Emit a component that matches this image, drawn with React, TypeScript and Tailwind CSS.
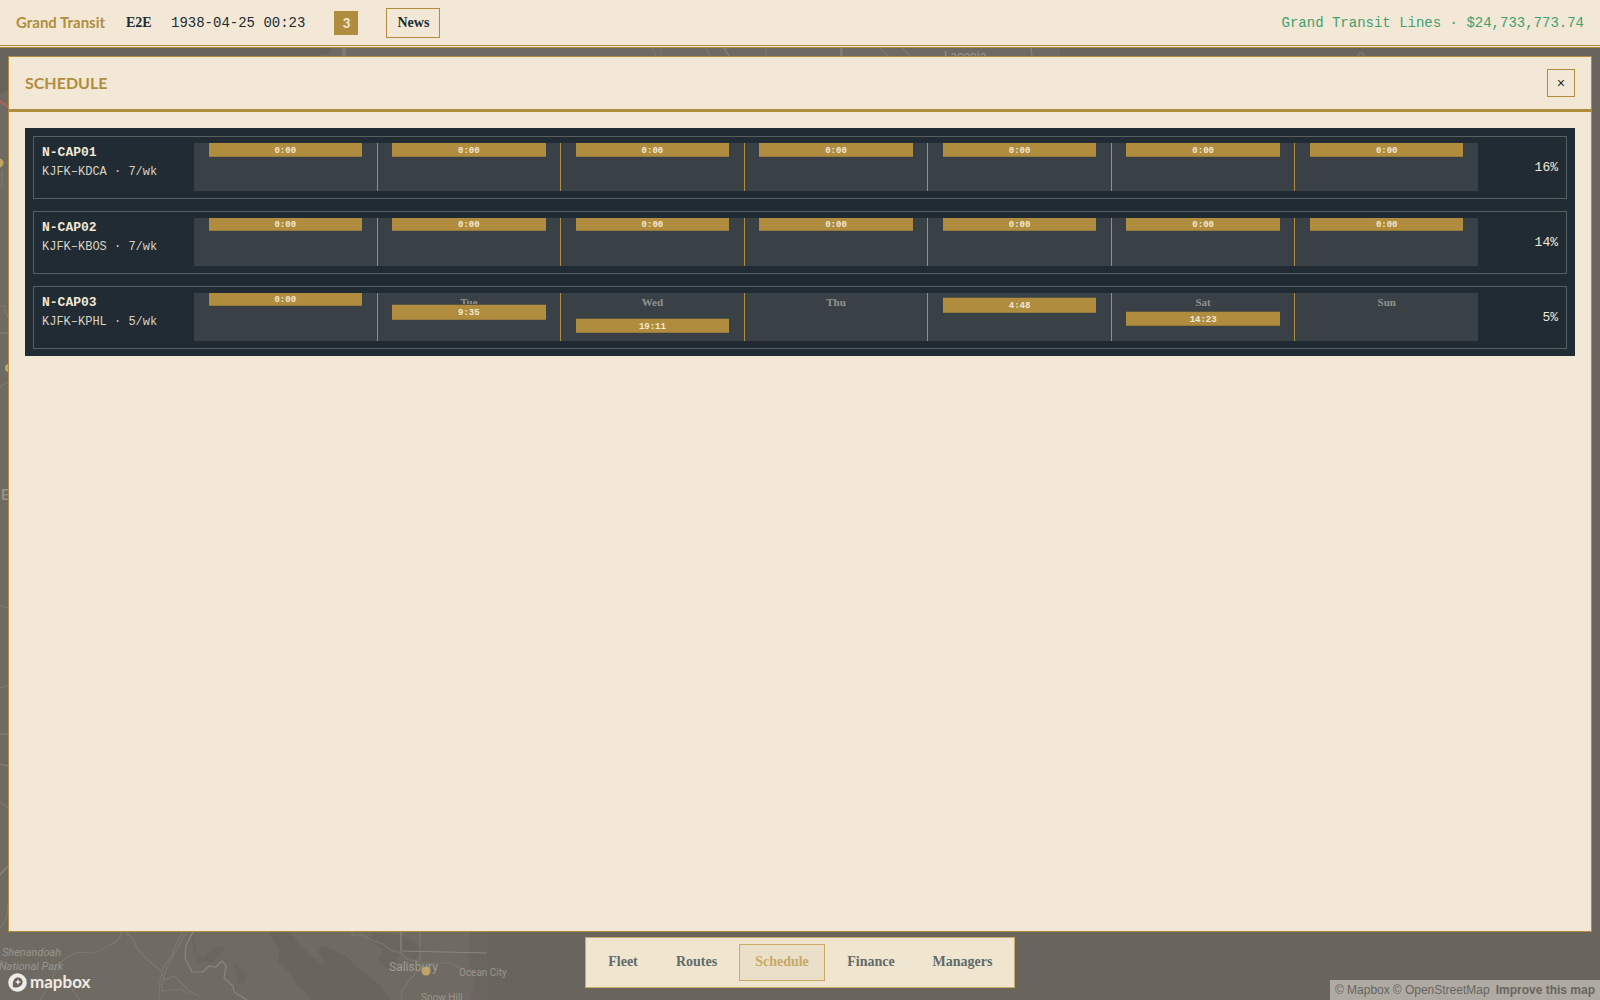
import React from "react";

const sans = "font-['Lato','Open_Sans',sans-serif]";
const serif = "font-['Liberation_Serif',serif]";
const mono = "font-['Liberation_Mono',monospace]";

type Departure = { time: string; top: number; height: number } | null;

const days = ["Mon", "Tue", "Wed", "Thu", "Fri", "Sat", "Sun"];

const daily = (height: number): Departure[] =>
  days.map(() => ({ time: "0:00", top: 0, height }));

const aircraft: { tail: string; route: string; load: string; week: Departure[] }[] = [
  { tail: "N-CAP01", route: "KJFK–KDCA · 7/wk", load: "16%", week: daily(14) },
  { tail: "N-CAP02", route: "KJFK–KBOS · 7/wk", load: "14%", week: daily(13) },
  {
    tail: "N-CAP03",
    route: "KJFK–KPHL · 5/wk",
    load: "5%",
    week: [
      { time: "0:00", top: 0, height: 13 },
      { time: "9:35", top: 11, height: 16 },
      { time: "19:11", top: 25, height: 15 },
      null,
      { time: "4:48", top: 4, height: 16 },
      { time: "14:23", top: 18, height: 15 },
      null,
    ],
  },
];

function MapBackdrop() {
  return (
    <div className="absolute inset-0 overflow-hidden bg-[#69655c]" aria-hidden="true">
      <svg className="absolute left-0 top-0" width="1600" height="1000" fill="none">
        <path d="M0 40H330L325 56L0 96Z" fill="#67635b" />
        <path d="M0 94L8 90L330 54L334 40H1060V56L486 80V1000H0Z" fill="#6f6b63" />
        <path
          d="M268 932L274 942L280 950L277 962L288 970L296 984L306 992L310 1000H390L380 985L360 970L345 955L322 945L318 952L326 965L318 962L300 945L290 932Z"
          fill="#69655c"
        />
        <path
          d="M193 935Q190 955 205 958Q215 942 226 948L212 962L198 962ZM234 962L248 975L242 985L256 990L238 982ZM374 932L402 936L424 948L414 960L400 952L392 972L378 960L384 950L368 940ZM470 932L486 932V1000H470L476 980L468 960Z"
          fill="#6a665e"
        />
        <g stroke="#7c7870" strokeWidth="1.2">
          <path d="M121 932V936L116 942L104 948L95 953L78 952L66 958L56 967L52 980L40 1000M125 932L133 939L137 949L148 960L160 970L165 980L174 976L188 990L199 996" />
          <path d="M183 932L174 948L172 956L164 966L160 980L159 1000M187 932L176 950L166 970L162 984V991L180 989L189 994" />
          <path d="M352 932V935L363 935L371 940L383 944L390 950L402 953L408 960L420 961V932M420 963H452L460 968M420 968L408 982L401 992L402 1000" />
          <path d="M0 162H8M2 170V187M0 306H5V312L8 317M8 382L0 387M0 605L8 608M0 688L8 685M0 802L8 808" />
          <path d="M8 903Q8 920 0 928M72 989L80 1000M0 960Q10 966 22 970" />
          <path d="M652 48L656 56M661 48V56M706 48L710 56M720 50L728 48M766 48V56M842 48V56M880 48L888 56M902 48L910 56" />
        </g>
        <g stroke="#8a867e" strokeWidth="1.2">
          <path d="M193 932L186 945L185 958L192 972H203L209 966L216 967L222 961L226 966L224 978L233 986L234 992L247 1000" />
          <path d="M401 932V951L487 953M0 333H8M0 734H8M0 764L8 766M8 866L0 875M343 48V56M345 48V56M724 48L729 56M841 48V56M1031 48L1032 56" />
        </g>
        <path d="M0 101L8 107" stroke="#b0605a" strokeWidth="1.8" />
        <circle cx="-1" cy="163" r="4.500" fill="#c2a468" />
        <circle cx="9" cy="368" r="4" fill="#c2a468" />
        <circle cx="1361" cy="56" r="3" stroke="#7d7971" strokeWidth="1.5" />
      </svg>
      <div className="absolute left-0 top-0 font-['Roboto',sans-serif] text-[12px] leading-[14px] whitespace-nowrap text-[#99958d]">
        <span className="absolute left-[1px] top-[488px] text-[15px] font-medium">E</span>
        <span className="absolute left-[944px] top-[49px]">Laconia</span>
        <span className="absolute left-[2px] top-[946px] text-[11px] italic">Shenandoah</span>
        <span className="absolute left-[-1px] top-[960px] text-[11px] italic">National Park</span>
        <span className="absolute left-[389px] top-[960px] text-[#a09c94]">Salisbury</span>
        <span className="absolute left-[459px] top-[966px] text-[10px]">Ocean City</span>
        <span className="absolute left-[421px] top-[991px] text-[10px]">Snow Hill</span>
      </div>
      <svg className="absolute left-[421px] top-[966px]" width="10" height="10">
        <circle cx="5" cy="5" r="4.500" fill="#c2a468" />
      </svg>
    </div>
  );
}

function TopBar() {
  return (
    <header className="relative flex h-12 shrink-0 items-center border-b-3 border-double border-[#b08d3e] bg-[#f3e8d5] px-4 text-[#212b33]">
      <span className={`${sans} w-[90px] text-[15px] font-bold whitespace-nowrap text-[#b08d3e]`}>Grand Transit</span>
      <span className={`${serif} ml-5 w-[25px] text-[14px] font-bold`}>E2E</span>
      <time className={`${mono} ml-5 pt-[2px] text-[14px]`}>1938-04-25 00:23</time>
      <span className={`${sans} ml-[29px] flex size-6 items-center justify-center bg-[#b08d3e] text-[13px] leading-6 font-black text-[#f3e8d5]`}>
        3
      </span>
      <button type="button" className={`${serif} ml-7 h-[30px] w-[54px] border border-[#b08d3e] text-[14px] font-bold`}>
        News
      </button>
      <span className={`${mono} ml-auto pt-[2px] text-[14px] text-[#3fa070]`}>Grand Transit Lines · $24,733,773.74</span>
    </header>
  );
}

function DayCell({ day, departure }: { day: string; departure: Departure }) {
  return (
    <div className="relative h-full overflow-hidden bg-[#394147]">
      <div className={`${serif} pt-[3px] text-center text-[11px] leading-[12px] font-bold text-[#92938d]`}>{day}</div>
      {departure && (
        <div
          className={`${mono} absolute inset-x-[8%] flex items-center justify-center border-b border-[#957a3c] bg-[#b08d3e] pt-[2px] text-[9px] leading-[10px] font-bold text-[#f3e8d5] ${
            departure.top > 0 ? "border-t border-t-[#58543f]" : ""
          }`}
          style={{ top: departure.top, height: departure.height }}
        >
          {departure.time}
        </div>
      )}
    </div>
  );
}

function SchedulePanel() {
  return (
    <section className="relative mx-2 mt-2 flex min-h-0 flex-1 flex-col border border-[#b08d3e] bg-[#f3e8d5]">
      <div className="flex h-[55px] shrink-0 items-center justify-between border-b-3 border-[#b08d3e] px-4">
        <h1 className={`${sans} text-[16px] leading-5 font-bold text-[#b08d3e]`}>SCHEDULE</h1>
        <button
          type="button"
          aria-label="Close"
          className={`${mono} flex size-7 items-center justify-center border border-[#b08d3e] pt-[2px] text-[14px] text-[#212b33]`}
        >
          ×
        </button>
      </div>
      <div className="p-4">
        <div className="flex flex-col gap-3 bg-[#212b33] px-2 pt-2 pb-[7px] text-[#f3e8d5]">
          {aircraft.map((a) => (
            <div key={a.tail} className="flex h-[63px] border border-[#595f5f] px-2 pt-[6px]">
              <div className={`${mono} w-[152px] shrink-0 pt-px`}>
                <div className="text-[13px] leading-[18px] font-bold">{a.tail}</div>
                <div className="text-[12px] leading-5 text-[#dad2c2]">{a.route}</div>
              </div>
              <div className="grid h-12 flex-1 grid-cols-7 gap-px bg-[#b08d3e]">
                {days.map((day, i) => (
                  <DayCell key={day} day={day} departure={a.week[i]} />
                ))}
              </div>
              <div className={`${mono} flex h-12 w-20 shrink-0 items-center justify-end pt-[2px] text-[13px]`}>{a.load}</div>
            </div>
          ))}
        </div>
      </div>
    </section>
  );
}

const tabs = [
  { label: "Fleet", width: "w-[62px]" },
  { label: "Routes", width: "w-[73px]" },
  { label: "Schedule", width: "w-[86px]" },
  { label: "Finance", width: "w-[80px]" },
  { label: "Managers", width: "w-[91px]" },
];

function BottomNav() {
  return (
    <nav className="relative mt-[5px] mb-3 flex h-[51px] shrink-0 gap-[6px] self-center border border-[#c9ab6c] bg-[#f0e6d0] p-[6px]">
      {tabs.map((t) => (
        <button
          key={t.label}
          type="button"
          className={`${serif} ${t.width} border pb-[2px] text-[14px] font-bold ${
            t.label === "Schedule"
              ? "border-[#c9a963] bg-[#eadfc8] text-[#c9a963]"
              : "border-transparent text-[#626a6c]"
          }`}
        >
          {t.label}
        </button>
      ))}
    </nav>
  );
}

function MapCredits() {
  return (
    <>
      <a href="#mapbox" aria-label="Mapbox" className="absolute bottom-2 left-2 flex h-5 items-center gap-[3px] text-[#efece5]">
        <svg width="19" height="19" viewBox="0 0 19 19">
          <circle cx="9.500" cy="9.500" r="9.300" fill="#efece5" />
          <path d="M5 14.300C4.400 10.500 5 7.600 6.600 5.900C8.500 4 11.500 4 13.300 5.800C15.100 7.600 15.100 10.500 13.200 12.400C11.500 14 8.500 14.700 5 14.300Z" fill="#69655c" />
          <path d="M10 6L10.900 8.100L13 9L10.900 9.900L10 12L9.100 9.900L7 9L9.100 8.100Z" fill="#efece5" />
        </svg>
        <span className={`${sans} text-[17px] leading-5 font-bold`}>mapbox</span>
      </a>
      <div className="absolute right-0 bottom-0 flex h-5 items-center bg-[#afaba3] px-[5px] font-['Liberation_Sans',sans-serif] text-[12px] whitespace-nowrap text-[#68655e]">
        <a href="#mapbox-about">© Mapbox</a>
        <a href="#osm" className="ml-[3px]">© OpenStreetMap</a>
        <a href="#improve" className="ml-[6px] font-bold">Improve this map</a>
      </div>
    </>
  );
}

export default function App() {
  return (
    <div className="relative flex h-screen flex-col overflow-hidden">
      <MapBackdrop />
      <TopBar />
      <SchedulePanel />
      <BottomNav />
      <MapCredits />
    </div>
  );
}
